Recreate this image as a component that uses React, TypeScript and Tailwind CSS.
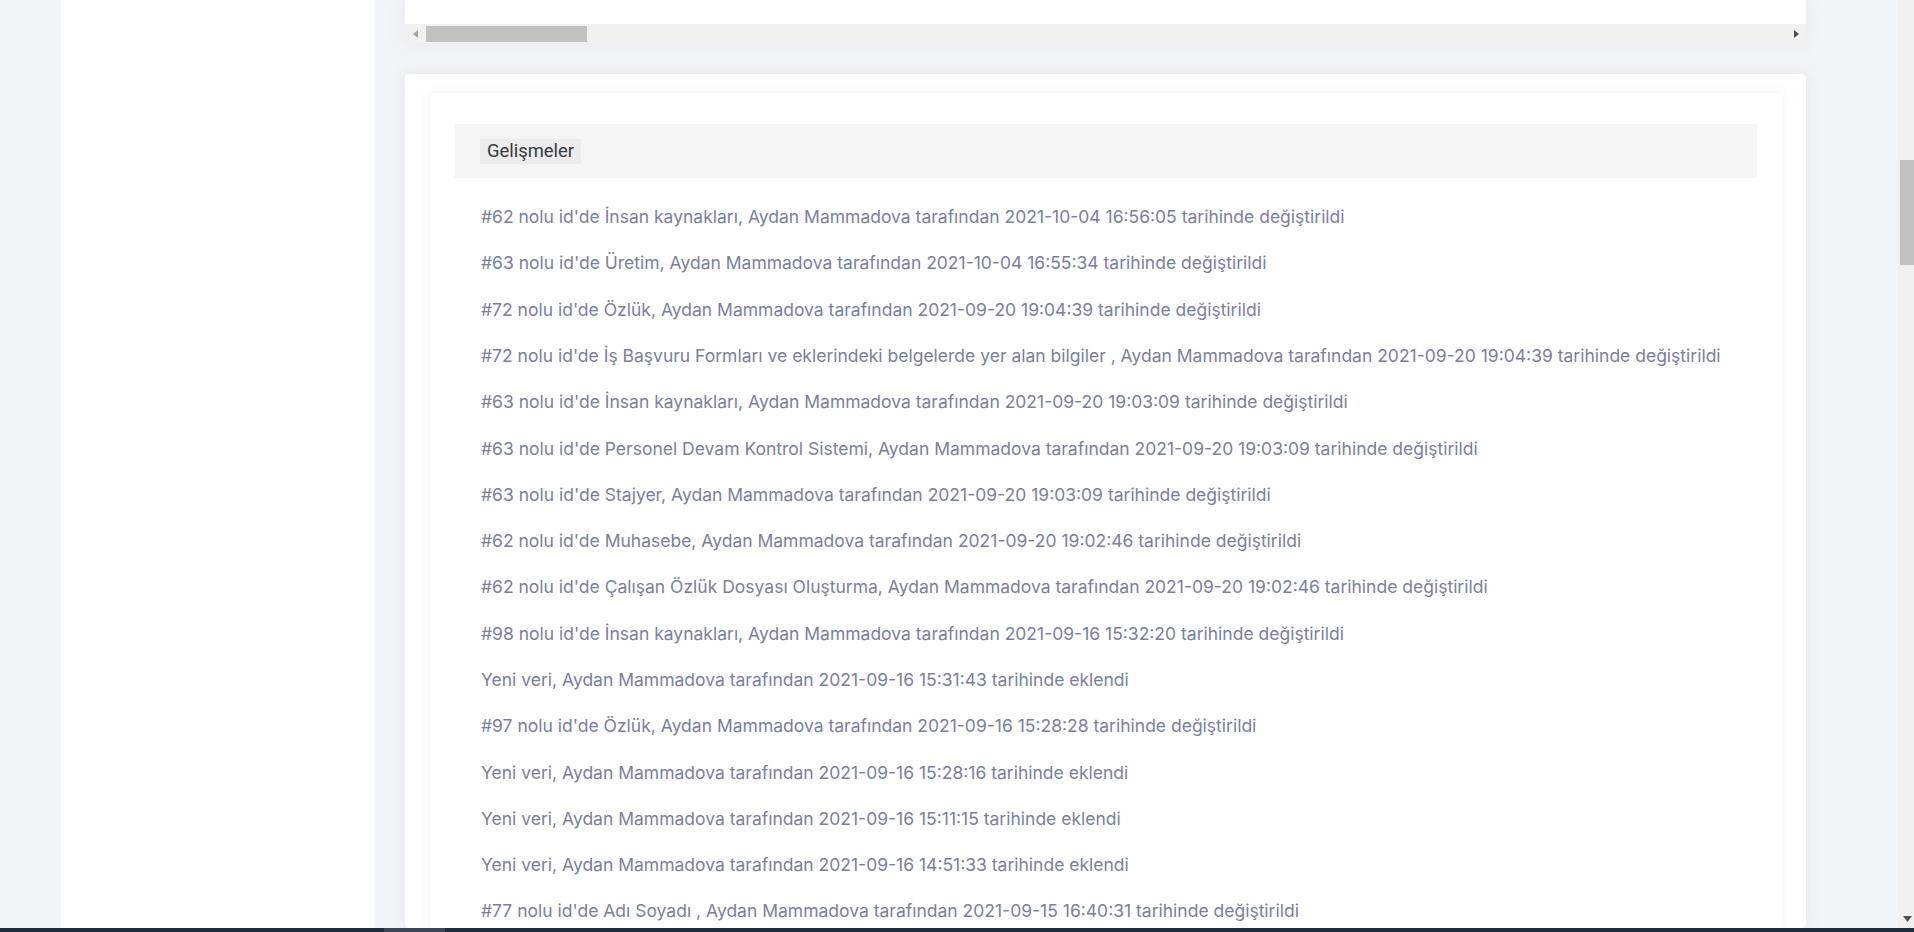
import React from "react";

const items = [
  "#62 nolu id'de İnsan kaynakları, Aydan Mammadova tarafından 2021-10-04 16:56:05 tarihinde değiştirildi",
  "#63 nolu id'de Üretim, Aydan Mammadova tarafından 2021-10-04 16:55:34 tarihinde değiştirildi",
  "#72 nolu id'de Özlük, Aydan Mammadova tarafından 2021-09-20 19:04:39 tarihinde değiştirildi",
  "#72 nolu id'de İş Başvuru Formları ve eklerindeki belgelerde yer alan bilgiler , Aydan Mammadova tarafından 2021-09-20 19:04:39 tarihinde değiştirildi",
  "#63 nolu id'de İnsan kaynakları, Aydan Mammadova tarafından 2021-09-20 19:03:09 tarihinde değiştirildi",
  "#63 nolu id'de Personel Devam Kontrol Sistemi, Aydan Mammadova tarafından 2021-09-20 19:03:09 tarihinde değiştirildi",
  "#63 nolu id'de Stajyer, Aydan Mammadova tarafından 2021-09-20 19:03:09 tarihinde değiştirildi",
  "#62 nolu id'de Muhasebe, Aydan Mammadova tarafından 2021-09-20 19:02:46 tarihinde değiştirildi",
  "#62 nolu id'de Çalışan Özlük Dosyası Oluşturma, Aydan Mammadova tarafından 2021-09-20 19:02:46 tarihinde değiştirildi",
  "#98 nolu id'de İnsan kaynakları, Aydan Mammadova tarafından 2021-09-16 15:32:20 tarihinde değiştirildi",
  "Yeni veri, Aydan Mammadova tarafından 2021-09-16 15:31:43 tarihinde eklendi",
  "#97 nolu id'de Özlük, Aydan Mammadova tarafından 2021-09-16 15:28:28 tarihinde değiştirildi",
  "Yeni veri, Aydan Mammadova tarafından 2021-09-16 15:28:16 tarihinde eklendi",
  "Yeni veri, Aydan Mammadova tarafından 2021-09-16 15:11:15 tarihinde eklendi",
  "Yeni veri, Aydan Mammadova tarafından 2021-09-16 14:51:33 tarihinde eklendi",
  "#77 nolu id'de Adı Soyadı , Aydan Mammadova tarafından 2021-09-15 16:40:31 tarihinde değiştirildi",
];

export default function App() {
  return (
    <div className="h-[932px] w-[1914px] overflow-hidden flex flex-col bg-[#f3f4f7] font-['Inter',sans-serif]">
      <div className="flex flex-1 min-h-0">
        {/* left strip + sidebar */}
        <div className="w-[61px] bg-[#f3f4f7]" />
        <div className="w-[314px] bg-white" />

        {/* main column */}
        <div className="w-[1522px] pl-[30px] flex flex-col min-h-0">
          <div className="w-[1401px] flex flex-col min-h-0">
            {/* bottom of previous card with horizontal scrollbar */}
            <div className="bg-white h-[43px] flex flex-col justify-end shadow-[0_0_14px_rgba(200,205,220,0.25)]">
              <div className="h-[19px] bg-[#f1f1f1] flex items-center pl-[8px] pr-[7px] gap-[8px]">
                <svg width="5" height="8" viewBox="0 0 5 8">
                  <path d="M5 0 L0 4 L5 8 Z" fill="#a3a3a3" />
                </svg>
                <div className="w-[161px] h-[16px] bg-[#c1c1c1]" />
                <div className="flex-1" />
                <svg width="5" height="8" viewBox="0 0 5 8">
                  <path d="M0 0 L5 4 L0 8 Z" fill="#505050" />
                </svg>
              </div>
            </div>

            {/* Gelişmeler card */}
            <div className="mt-[31px] bg-white rounded-[4px] pt-[19px] pl-[25px] pr-[24px] shadow-[0_0_14px_rgba(200,205,220,0.35)] flex-1 min-h-0">
              <div className="h-full pt-[31px] px-[25px] shadow-[0_0_12px_rgba(210,214,226,0.35)] rounded-[4px]">
                <div className="h-[54px] bg-[#f5f5f5] flex items-center pl-[25px]">
                  <span className="bg-[#ececec] h-[25px] px-[7px] flex items-center text-[18.4px] text-[#343a40] font-['Roboto',sans-serif]">
                    Gelişmeler
                  </span>
                </div>
                <ul className="pt-[16px] pl-[26px]">
                  {items.map((t, i) => (
                    <li
                      key={i}
                      className="py-[11.15px] leading-[24px] text-[17.5px] text-[#7a7f9c] whitespace-nowrap"
                    >
                      {t}
                    </li>
                  ))}
                </ul>
              </div>
            </div>
          </div>
        </div>

        {/* vertical scrollbar */}
        <div className="w-[17px] bg-[#f1f1f1] flex flex-col items-center">
          <div className="h-[8px]" />
          <div className="mt-[152px] ml-[3px] w-[14px] h-[105px] bg-[#c1c1c1]" />
          <div className="flex-1" />
          <svg width="9" height="6" viewBox="0 0 9 6" className="mb-[6px] ml-[3px]">
            <path d="M0 0 L9 0 L4.5 6 Z" fill="#505050" />
          </svg>
        </div>
      </div>

      {/* bottom dark bar */}
      <div className="h-[4px] bg-[#1e2b3b] flex">
        <div className="w-[384px]" />
        <div className="w-[61px] bg-[#3a4654]" />
      </div>
    </div>
  );
}
